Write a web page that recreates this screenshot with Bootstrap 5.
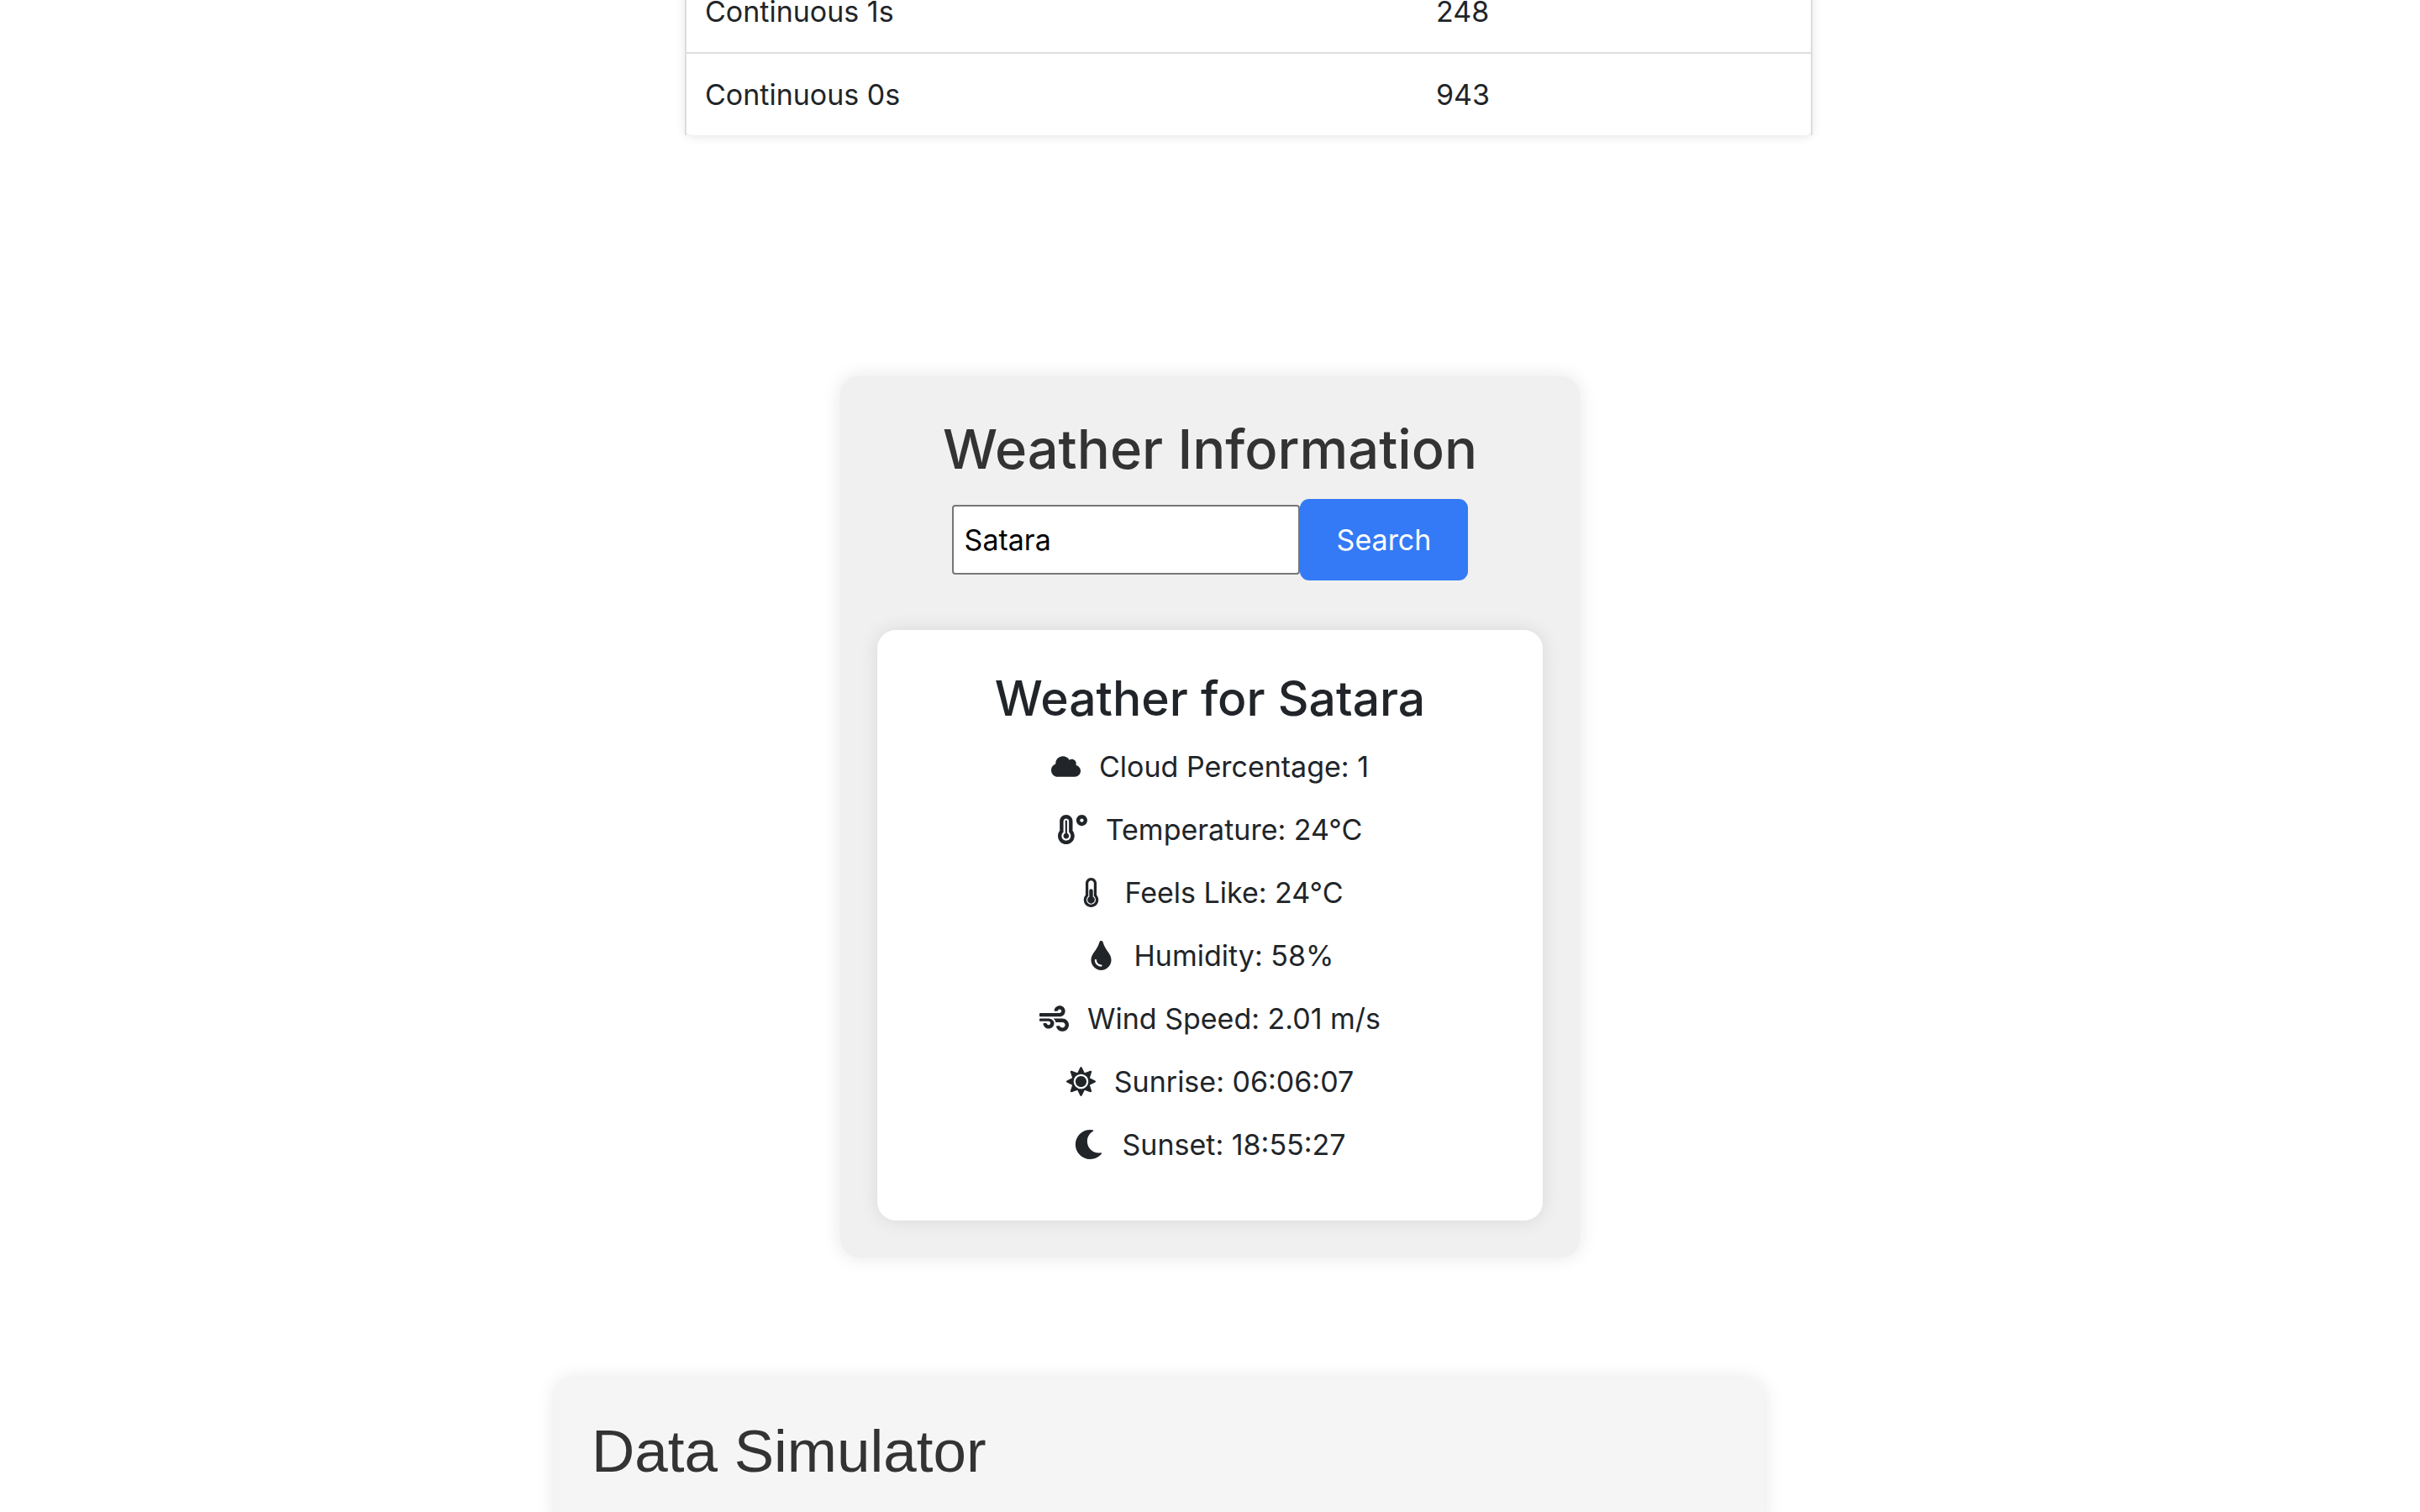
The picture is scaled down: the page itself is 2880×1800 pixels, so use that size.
<!DOCTYPE html>
<html lang="en">
<head>
<meta charset="utf-8">
<meta name="viewport" content="width=device-width, initial-scale=1">
<title>Dashboard</title>
<link href="https://cdn.jsdelivr.net/npm/bootstrap@5.3.0/dist/css/bootstrap.min.css" rel="stylesheet">
<style>
  body { font-family: Inter, "Liberation Sans", sans-serif; font-size: 34px; line-height: 53px; color: #212529; background: #fff; }
  .results-wrap { padding-left: 92px; }
  .results { max-width: 1342px; margin: -35px auto 0; border-radius: 0 0 9px 9px; box-shadow: 0 2px 12px rgba(0,0,0,.1); }
  .results-table { --bs-table-bg: transparent; border-collapse: collapse; border: 2px solid #ddd; border-width: 0 2px; color: inherit; }
  .results-table td { padding: 22px; border: 0; }
  .results-table tr + tr td { border-top: 2px solid #ddd; }
  .results-table td:first-child { width: 65%; }
  .weather { width: 100%; max-width: 880px; margin: 287px auto 144px; padding: 44px; border-radius: 22px; background: #f0f0f0; box-shadow: 0 0 22px rgba(0,0,0,.1); }
  .weather-title { font-size: 65px; line-height: 86px; margin-bottom: 16px; color: #333; }
  .city-field { width: 414px; height: 83px; padding: 2px 13px; font-size: 34px; color: #000; background: #fff; border: 2px solid #767676; border-radius: 4px; }
  .search-btn { padding: 22px 44px; font-size: 34px; line-height: 53px; border: 0; border-radius: 11px; --bs-btn-bg: #347af6; }
  .report { margin-top: 59px; padding: 44px 44px 42px; border-radius: 22px; box-shadow: 0 0 22px rgba(0,0,0,.1); }
  .report-title { font-size: 57px; line-height: 76px; margin-bottom: 16px; }
  .reading { gap: 22px; margin-bottom: 22px; }
  .reading svg { width: 35px; height: 35px; fill: currentColor; flex: none; }
  .simulator-wrap { padding-right: 120px; }
  .simulator { width: 100%; max-width: 1440px; padding: 44px; border-radius: 22px 22px 0 0; background: #f5f5f5; box-shadow: 0 0 22px rgba(0,0,0,.1); }
  .simulator-title { font-family: "Liberation Sans", Arial, sans-serif; font-size: 71px; line-height: 86px; font-weight: 400; color: #333; }
</style>
<script src="https://cdn.jsdelivr.net/npm/bootstrap@5.3.0/dist/js/bootstrap.bundle.min.js"></script>
</head>
<body class="d-flex flex-column vh-100 overflow-hidden">
<section class="results-wrap">
  <div class="results">
    <table class="table results-table mb-0">
      <tbody>
        <tr><td>Continuous 1s</td><td>248</td></tr>
        <tr><td>Continuous 0s</td><td>943</td></tr>
      </tbody>
    </table>
  </div>
</section>

<section class="weather text-center">
  <h2 class="weather-title">Weather Information</h2>
  <form class="d-flex justify-content-center align-items-center" onsubmit="return false">
    <input type="text" class="city-field" value="Satara" aria-label="City">
    <button type="submit" class="btn btn-primary search-btn">Search</button>
  </form>
  <div class="report bg-white">
    <h3 class="report-title">Weather for Satara</h3>
    <ul class="list-unstyled mb-0">
      <li class="reading d-flex justify-content-center align-items-center">
        <svg viewBox="0 0 640 512" aria-hidden="true"><path d="M537.6 226.6c4.1-10.7 6.4-22.4 6.4-34.6 0-53-43-96-96-96-19.7 0-38.1 6-53.3 16.2C367 64.2 315.3 32 256 32c-88.4 0-160 71.6-160 160 0 2.7.1 5.4.2 8.1C40.2 219.8 0 273.2 0 336c0 79.5 64.5 144 144 144h368c70.7 0 128-57.3 128-128 0-61.9-44-113.6-102.4-125.4z"/></svg>
        <span>Cloud Percentage: 1</span></li>
      <li class="reading d-flex justify-content-center align-items-center">
        <svg viewBox="0 0 512 512" aria-hidden="true"><path d="M416 0c-52.9 0-96 43.1-96 96s43.1 96 96 96 96-43.1 96-96-43.1-96-96-96zm0 128c-17.7 0-32-14.3-32-32s14.3-32 32-32 32 14.3 32 32-14.3 32-32 32zm-160-16C256 50.1 205.9 0 144 0S32 50.1 32 112v166.5C12.3 303.2 0 334 0 368c0 79.5 64.5 144 144 144s144-64.5 144-144c0-34-12.3-64.9-32-89.5V112zM144 448c-44.1 0-80-35.9-80-80 0-25.5 12.2-48.9 32-63.8V112c0-26.5 21.5-48 48-48s48 21.5 48 48v192.2c19.8 14.8 32 38.3 32 63.8 0 44.1-35.9 80-80 80zm16-125.1V112c0-8.8-7.2-16-16-16s-16 7.2-16 16v210.9c-18.6 6.6-32 24.2-32 45.1 0 26.5 21.5 48 48 48s48-21.5 48-48c0-20.9-13.4-38.5-32-45.1z"/></svg>
        <span>Temperature: 24°C</span></li>
      <li class="reading d-flex justify-content-center align-items-center">
        <svg viewBox="0 0 256 512" aria-hidden="true"><path d="M192 384c0 35.346-28.654 64-64 64s-64-28.654-64-64c0-23.685 12.876-44.349 32-55.417V224c0-17.673 14.327-32 32-32s32 14.327 32 32v104.583c19.124 11.068 32 31.732 32 55.417zm32-84.653c19.912 22.563 32 52.194 32 84.653 0 70.696-57.303 128-128 128-.299 0-.609-.001-.909-.003C56.789 511.509-.357 453.636.002 383.333.166 351.135 12.277 321.756 32 299.347V96c0-53.019 42.981-96 96-96s96 42.981 96 96v203.347zM208 384c0-34.339-19.37-52.19-32-66.502V96c0-26.467-21.533-48-48-48S80 69.533 80 96v221.498c-12.732 14.428-31.825 32.1-31.999 66.08-.224 43.876 35.563 80.116 79.423 80.42L128 464c44.112 0 80-35.888 80-80z"/></svg>
        <span>Feels Like: 24°C</span></li>
      <li class="reading d-flex justify-content-center align-items-center">
        <svg viewBox="0 0 352 512" aria-hidden="true"><path d="M205.22 22.09c-7.94-28.78-49.44-30.12-58.44 0C100.01 179.85 0 222.72 0 333.91 0 432.35 78.72 512 176 512s176-79.65 176-178.09c0-111.75-99.79-153.34-146.78-311.82zM176 448c-61.75 0-112-50.25-112-112 0-8.84 7.16-16 16-16s16 7.16 16 16c0 44.11 35.89 80 80 80 8.84 0 16 7.16 16 16s-7.16 16-16 16z"/></svg>
        <span>Humidity: 58%</span></li>
      <li class="reading d-flex justify-content-center align-items-center">
        <svg viewBox="0 0 512 512" aria-hidden="true"><path d="M156.7 256H16c-8.8 0-16 7.2-16 16v16c0 8.8 7.2 16 16 16h142.2c15.9 0 30.8 10.9 33.4 26.6 3.3 20-12.1 37.4-31.6 37.4-14.1 0-26.1-9.2-30.4-21.9-2.1-6.3-8.6-10.1-15.2-10.1H81.6c-9.8 0-17.7 8.8-15.9 18.4 8.6 44.1 47.6 77.6 94.2 77.6 57.1 0 102.7-50.1 95.2-108.6C249 291 205.4 256 156.7 256zM16 224h336c59.7 0 106.8-54.8 93.8-116.7-7.6-36.2-36.9-65.5-73.1-73.1-55.4-11.6-105.1 24.9-114.9 75.5-1.9 9.6 6.1 18.3 15.8 18.3h32.8c6.7 0 13.1-3.8 15.2-10.1C325.9 105.2 337.9 96 352 96c19.4 0 34.9 17.4 31.6 37.4-2.6 15.7-17.4 26.6-33.4 26.6H16c-8.8 0-16 7.2-16 16v32c0 8.8 7.2 16 16 16zm384 32H243.7c19.3 16.6 33.2 38.8 39.8 64H400c26.5 0 48 21.5 48 48s-21.5 48-48 48c-17.9 0-33.3-9.9-41.6-24.4-2.9-5-8.7-7.6-14.5-7.6h-33.8c-10.9 0-19 10.8-15.3 21.1 17.8 50.6 70.5 84.8 129.4 72.3 41.2-8.7 75.1-41.6 84.7-82.7C526 321.5 470.5 256 400 256z"/></svg>
        <span>Wind Speed: 2.01 m/s</span></li>
      <li class="reading d-flex justify-content-center align-items-center">
        <svg viewBox="0 0 512 512" aria-hidden="true"><path d="M256 160c-52.9 0-96 43.1-96 96s43.1 96 96 96 96-43.1 96-96-43.1-96-96-96zm246.4 80.5l-94.7-47.3 33.5-100.4c4.5-13.6-8.4-26.5-21.9-21.9l-100.4 33.5-47.4-94.8c-6.4-12.8-24.6-12.8-31 0l-47.3 94.7L92.7 70.8c-13.6-4.5-26.5 8.4-21.9 21.9l33.5 100.4-94.7 47.4c-12.8 6.4-12.8 24.6 0 31l94.7 47.3-33.5 100.5c-4.5 13.6 8.4 26.5 21.9 21.9l100.4-33.5 47.3 94.7c6.4 12.8 24.6 12.8 31 0l47.3-94.7 100.4 33.5c13.6 4.5 26.5-8.4 21.9-21.9l-33.5-100.4 94.7-47.3c13-6.5 13-24.7.2-31.1zm-155.9 106c-49.9 49.9-131.1 49.9-181 0-49.9-49.9-49.9-131.1 0-181 49.9-49.9 131.1-49.9 181 0 49.9 49.9 49.9 131.1 0 181z"/></svg>
        <span>Sunrise: 06:06:07</span></li>
      <li class="reading d-flex justify-content-center align-items-center">
        <svg viewBox="0 0 512 512" aria-hidden="true"><path d="M283.211 512c78.962 0 151.079-35.925 198.857-94.792 7.068-8.708-.639-21.43-11.562-19.35-124.203 23.654-238.262-71.576-238.262-196.954 0-72.222 38.662-138.635 101.498-174.394 9.686-5.512 7.25-20.197-3.756-22.23A258.156 258.156 0 0 0 283.211 0c-141.309 0-256 114.511-256 256 0 141.309 114.511 256 256 256z"/></svg>
        <span>Sunset: 18:55:27</span></li>
    </ul>
  </div>
</section>

<section class="simulator-wrap d-flex justify-content-center flex-grow-1">
  <div class="simulator">
    <h2 class="simulator-title mb-0">Data Simulator</h2>
  </div>
</section>
</body>
</html>
